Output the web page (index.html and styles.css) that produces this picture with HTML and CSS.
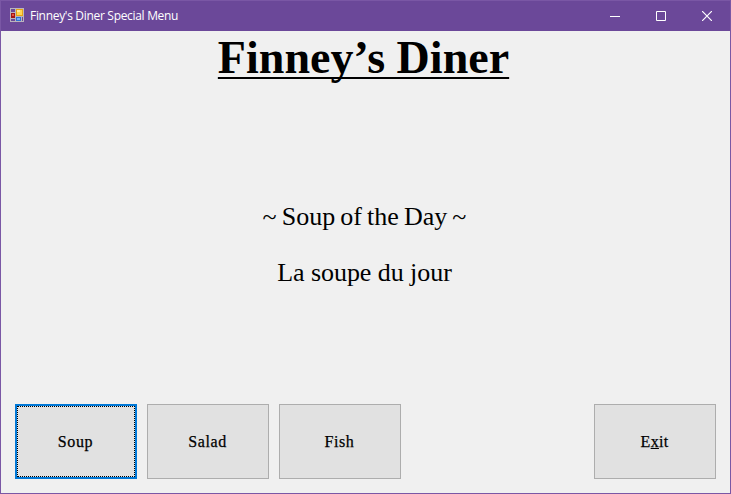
FILE: index.html
```html
<!DOCTYPE html>
<html lang="en">
<head>
<meta charset="utf-8">
<title>Finney's Diner Special Menu</title>
<link rel="stylesheet" href="styles.css">
</head>
<body>
<div class="window">
  <header class="titlebar">
    <svg class="app-icon" width="14" height="14" viewBox="0 0 14 14" shape-rendering="crispEdges">
      <rect width="14" height="14" fill="#b9b4bd"/>
      <rect x="1" y="1" width="4" height="3" fill="#6b4a98"/>
      <rect x="1" y="5" width="4" height="5" fill="#a31515"/>
      <rect x="2" y="6" width="2" height="2" fill="#e8533f"/>
      <rect x="1" y="11" width="4" height="2" fill="#6b4a98"/>
      <rect x="6" y="1" width="7" height="7" fill="#e5a313"/>
      <rect x="7" y="2" width="5" height="5" fill="#ffd552"/>
      <rect x="7" y="2" width="3" height="2" fill="#ffe99b"/>
      <rect x="6" y="9" width="5" height="4" fill="#2f6fd0"/>
      <rect x="7" y="10" width="3" height="2" fill="#75b0f5"/>
      <rect x="12" y="9" width="1" height="4" fill="#6b4a98"/>
    </svg>
    <span class="caption">Finney's Diner Special Menu</span>
    <div class="controls">
      <svg width="10" height="10" viewBox="0 0 10 10"><path d="M0 5.5H10" stroke="#fff"/></svg>
      <svg width="10" height="10" viewBox="0 0 10 10"><path d="M.5 .5H9.5V9.5H.5Z" fill="none" stroke="#fff"/></svg>
      <svg width="10" height="10" viewBox="0 0 10 10"><path d="M0 0L10 10M10 0L0 10" stroke="#fff" stroke-width="1.2"/></svg>
    </div>
  </header>
  <main class="form">
    <h1 class="heading">Finney’s Diner</h1>
    <div class="special">
      <p class="kind">~ Soup of the Day ~</p>
      <p class="dish">La soupe du jour</p>
    </div>
    <div class="buttons">
      <button class="button focused">Soup</button>
      <button class="button">Salad</button>
      <button class="button">Fish</button>
      <button class="button exit">E<span class="key">x</span>it</button>
    </div>
  </main>
</div>
</body>
</html>
```
FILE: styles.css
```css
* { box-sizing: border-box; }
body { margin: 0; background: #f0f0f0; }
.window {
  display: flex;
  flex-direction: column;
  width: 731px;
  height: 494px;
  border: 1px solid #7a57a5;
  background: #f0f0f0;
}
.titlebar {
  display: flex;
  align-items: center;
  height: 30px;
  padding: 0 18px 0 9px;
  background: #6b4899;
  color: #fff;
}
.app-icon { display: block; margin-bottom: 2px; }
.caption {
  margin-left: 6px;
  font: 12px/30px "Open Sans", "Noto Sans", sans-serif;
  letter-spacing: -0.31px;
  white-space: nowrap;
}
.controls { display: flex; gap: 36px; margin-left: auto; }
.controls svg { display: block; }
.form {
  flex: 1;
  display: flex;
  flex-direction: column;
  padding: 0 14px 14px;
  color: #000;
  font-family: "Liberation Serif", serif;
}
.heading {
  align-self: center;
  margin: 1px 4px 0 0;
  font-size: 46px;
  line-height: 52px;
  font-weight: bold;
  letter-spacing: 0.03px;
  white-space: nowrap;
  text-decoration: underline;
  text-decoration-thickness: 2px;
  text-underline-offset: 4px;
  text-decoration-skip-ink: none;
}
.special {
  margin: 118px 2px 0 0;
  text-align: center;
  font-size: 26px;
  line-height: 30px;
}
.special p { margin: 0 0 26px; white-space: nowrap; }
.kind { word-spacing: -1.4px; }
.dish { letter-spacing: -0.06px; }
.buttons { display: flex; gap: 10px; margin-top: auto; }
.button {
  width: 122px;
  height: 75px;
  padding: 0 1px 0 0;
  border: 1px solid #adadad;
  background: #e1e1e1;
  color: #000;
  font: 16px/20px "Liberation Serif", serif;
  letter-spacing: 0.6px;
  -webkit-text-stroke: 0.25px #000;
}
.focused {
  border: 2px solid #0078d7;
  outline: 1px dotted #000;
  outline-offset: -3px;
}
.exit { margin-left: auto; letter-spacing: 0.3px; }
.key { text-decoration: underline; text-underline-offset: 1px; }
```
